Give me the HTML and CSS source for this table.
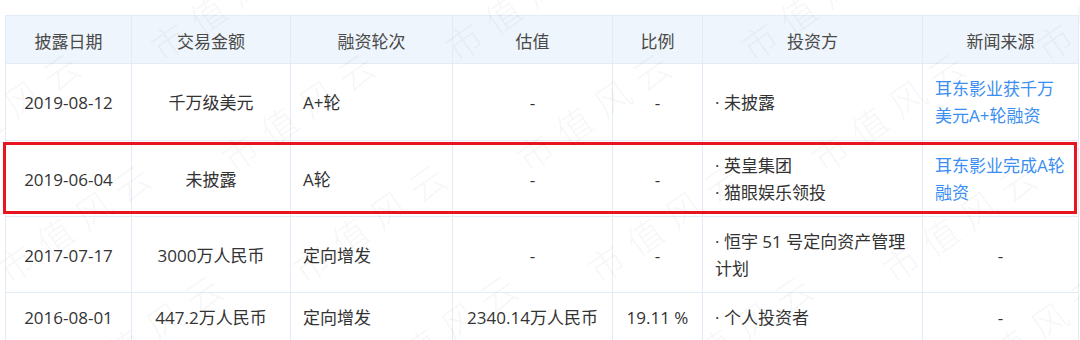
FILE: index.html
```html
<!DOCTYPE html>
<html lang="zh-CN">
<head>
<meta charset="utf-8">
<title>融资历史</title>
<link rel="stylesheet" href="styles.css">
</head>
<body>
<div class="page">
  <div class="table-wrap">
    <table class="fin">
      <colgroup>
        <col class="w-date"><col class="w-amount"><col class="w-round"><col class="w-val"><col class="w-ratio"><col class="w-inv"><col class="w-news">
      </colgroup>
      <thead>
        <tr>
          <th>披露日期</th><th>交易金额</th><th>融资轮次</th><th>估值</th><th>比例</th><th>投资方</th><th>新闻来源</th>
        </tr>
      </thead>
      <tbody>
        <tr class="r-first">
          <td class="ctr">2019-08-12</td>
          <td class="ctr">千万级美元</td>
          <td>A+轮</td>
          <td class="ctr">-</td>
          <td class="ctr">-</td>
          <td><div class="inv">· 未披露</div></td>
          <td><a class="news" href="#">耳东影业获千万美元A+轮融资</a></td>
        </tr>
        <tr>
          <td class="ctr">2019-06-04</td>
          <td class="ctr">未披露</td>
          <td>A轮</td>
          <td class="ctr">-</td>
          <td class="ctr">-</td>
          <td><div class="inv">· 英皇集团</div><div class="inv">· 猫眼娱乐领投</div></td>
          <td><a class="news" href="#">耳东影业完成A轮融资</a></td>
        </tr>
        <tr>
          <td class="ctr">2017-07-17</td>
          <td class="ctr">3000万人民币</td>
          <td>定向增发</td>
          <td class="ctr">-</td>
          <td class="ctr">-</td>
          <td><div class="inv">· 恒宇 51 号定向资产管理计划</div></td>
          <td class="ctr">-</td>
        </tr>
        <tr>
          <td class="ctr">2016-08-01</td>
          <td class="ctr">447.2万人民币</td>
          <td>定向增发</td>
          <td class="ctr">2340.14万人民币</td>
          <td class="ctr">19.11 %</td>
          <td><div class="inv">· 个人投资者</div></td>
          <td class="ctr">-</td>
        </tr>
      </tbody>
    </table>
    <div class="highlight"></div>
  </div>
  <div class="watermark" aria-hidden="true">
    <span class="wm" style="left:-145px;top:22px">市值风云</span>
    <span class="wm" style="left:150px;top:22px">市值风云</span>
    <span class="wm" style="left:445px;top:22px">市值风云</span>
    <span class="wm" style="left:740px;top:22px">市值风云</span>
    <span class="wm" style="left:1035px;top:22px">市值风云</span>
    <span class="wm" style="left:-74px;top:133px">市值风云</span>
    <span class="wm" style="left:221px;top:133px">市值风云</span>
    <span class="wm" style="left:516px;top:133px">市值风云</span>
    <span class="wm" style="left:811px;top:133px">市值风云</span>
    <span class="wm" style="left:-3px;top:244px">市值风云</span>
    <span class="wm" style="left:292px;top:244px">市值风云</span>
    <span class="wm" style="left:587px;top:244px">市值风云</span>
    <span class="wm" style="left:882px;top:244px">市值风云</span>
    <span class="wm" style="left:68px;top:355px">市值风云</span>
    <span class="wm" style="left:363px;top:355px">市值风云</span>
    <span class="wm" style="left:658px;top:355px">市值风云</span>
    <span class="wm" style="left:953px;top:355px">市值风云</span>
  </div>
</div>
</body>
</html>
```

FILE: styles.css
```css
* { box-sizing: border-box; }

html, body {
  margin: 0;
  padding: 0;
  background: #ffffff;
}

body {
  font-family: "Open Sans", "Noto Sans CJK SC", sans-serif;
  font-size: 17px;
  color: #333333;
}

.page {
  position: relative;
  width: 1080px;
  height: 340px;
  overflow: hidden;
  padding: 15px 0 0 5px;
}

.table-wrap {
  position: relative;
  width: 1074px;
}

.fin {
  border-collapse: collapse;
  table-layout: fixed;
  width: 1074px;
}

.w-date { width: 126px; }
.w-amount { width: 159px; }
.w-round { width: 162px; }
.w-val { width: 160px; }
.w-ratio { width: 90px; }
.w-inv { width: 220px; }
.w-news { width: 156px; }

.fin th,
.fin td {
  border: 1px solid #e3ecf6;
}

.fin th {
  height: 48px;
  padding: 3px 0 0;
  background: #eef5fc;
  color: #4a4a4a;
  font-weight: 400;
  text-align: center;
  line-height: 27px;
}

.fin td {
  padding: 11px 11px 10px 12px;
  line-height: 27px;
  text-align: left;
  vertical-align: middle;
}

.fin .r-first td {
  padding-bottom: 11px;
}

.fin td.ctr {
  text-align: center;
  padding-left: 6px;
  padding-right: 6px;
}

.inv {
  line-height: 27px;
  padding-left: 0;
}

.news {
  display: block;
  color: #3a8ef2;
  text-decoration: none;
}

.highlight {
  position: absolute;
  left: -2px;
  top: 127px;
  width: 1074px;
  height: 72px;
  border: 3px solid #e8141f;
  pointer-events: none;
}

.watermark {
  position: absolute;
  inset: 0;
  pointer-events: none;
}

.wm {
  position: absolute;
  display: block;
  white-space: nowrap;
  font-family: "Noto Sans CJK SC", sans-serif;
  font-weight: 300;
  font-size: 36px;
  line-height: 36px;
  letter-spacing: 11px;
  color: rgba(0, 0, 0, 0.055);
  transform-origin: 18px 18px;
  transform: rotate(-35deg);
}
```
